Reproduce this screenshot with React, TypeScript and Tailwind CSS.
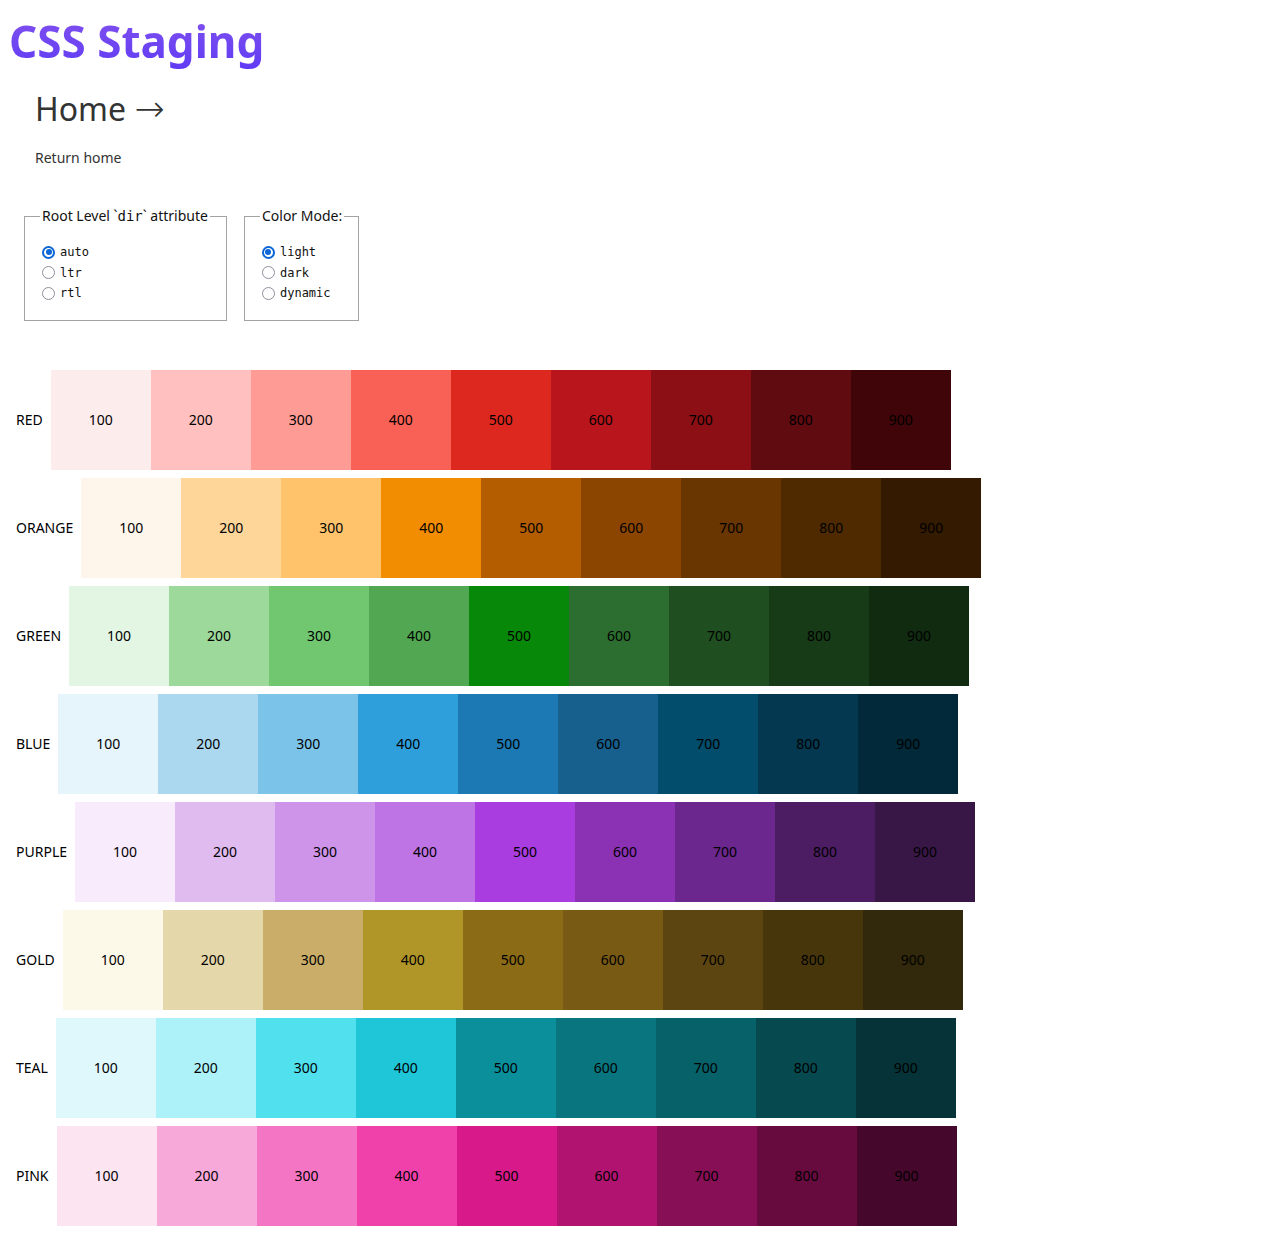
import React from "react"

type Scale = { name: string; colors: string[] }

const scales: Scale[] = [
  {
    name: "RED",
    colors: ["#fdecec", "#ffc0bf", "#ff9b95", "#f96156", "#dc281e", "#b8161c", "#8b0f14", "#5f0b10", "#3f0508"],
  },
  {
    name: "ORANGE",
    colors: ["#fff6eb", "#ffd699", "#ffc46b", "#f28c00", "#b35c00", "#8c4500", "#693500", "#4f2a00", "#331a00"],
  },
  {
    name: "GREEN",
    colors: ["#e3f5e3", "#9dd99b", "#70c770", "#52a852", "#088808", "#2b6e2f", "#1f4f20", "#173b17", "#112b11"],
  },
  {
    name: "BLUE",
    colors: ["#e6f4fb", "#acd8ef", "#7bc3e8", "#2f9fdc", "#1d79b3", "#175f8d", "#034d6c", "#033850", "#012939"],
  },
  {
    name: "PURPLE",
    colors: ["#f8ebfc", "#e0bbf0", "#cd94ea", "#be74e4", "#aa3de0", "#8a31b4", "#6b278e", "#4c1d62", "#381747"],
  },
  {
    name: "GOLD",
    colors: ["#fdf9e9", "#e4d7aa", "#c9ad68", "#b09529", "#8b6b15", "#795a14", "#5c4510", "#47360c", "#32280b"],
  },
  {
    name: "TEAL",
    colors: ["#dff8fb", "#acf2f8", "#50e0ee", "#1fc6d7", "#0b8f9b", "#09767f", "#076168", "#064a50", "#053338"],
  },
  {
    name: "PINK",
    colors: ["#fce4f1", "#f7a9d9", "#f375c3", "#ef41a9", "#d8198a", "#b11470", "#870f55", "#670b3f", "#45072b"],
  },
]

const steps = ["100", "200", "300", "400", "500", "600", "700", "800", "900"]

function Radio({ label, checked }: { label: string; checked?: boolean }) {
  return (
    <label className="flex items-center gap-[5px] h-[20.5px] ml-[2px]">
      {checked ? (
        <span className="w-[13px] h-[13px] rounded-full border-2 border-[#0b66d6] flex items-center justify-center">
          <span className="w-[6px] h-[6px] rounded-full bg-[#0b66d6]" />
        </span>
      ) : (
        <span className="w-[13px] h-[13px] rounded-full border border-[#8f8f9d]" />
      )}
      <span className="font-['DejaVu_Sans_Mono',monospace] text-[12px] text-[#111]">{label}</span>
    </label>
  )
}

export default function App() {
  return (
    <div className="min-h-[1242px] bg-white font-['Noto_Sans',sans-serif] text-[#111]">
      <h1 className="pt-[8px] pl-[9px] text-[44px] font-bold leading-normal">
        <span className="bg-gradient-to-b from-[#8451ee] to-[#5f3af4] bg-clip-text text-transparent">
          CSS Staging
        </span>
      </h1>

      <div className="pl-[35px] mt-[11px] text-[#333]">
        <h2 className="text-[32px] leading-normal">
          Home{" "}
          <span className="font-['DejaVu_Sans',sans-serif] font-extralight text-[36px] leading-none">→</span>
        </h2>
        <p className="mt-[15px] text-sm">Return home</p>
      </div>

      <div className="flex items-start gap-[17px] pl-[24px] mt-[41px]">
        <fieldset className="border border-[#a3a3a3] pl-[15px] pr-[16px] pb-[16px]">
          <legend className="px-[2px] text-sm leading-none">
            Root Level `<span className="font-['DejaVu_Sans_Mono',monospace] text-[14px]">dir</span>` attribute
          </legend>
          <div className="mt-[19px] flex flex-col">
            <Radio label="auto" checked />
            <Radio label="ltr" />
            <Radio label="rtl" />
          </div>
        </fieldset>
        <fieldset className="border border-[#a3a3a3] pl-[15px] pr-[14px] pb-[16px]">
          <legend className="px-[2px] text-sm leading-none">Color Mode:</legend>
          <div className="mt-[19px] flex flex-col">
            <Radio label="light" checked />
            <Radio label="dark" />
            <Radio label="dynamic" />
          </div>
        </fieldset>
      </div>

      <div className="mt-[49px] flex flex-col gap-2">
        {scales.map((s) => (
          <div key={s.name} className="flex items-center">
            <div className="pl-4 pr-2 text-sm text-black">{s.name}</div>
            {s.colors.map((c, i) => (
              <div
                key={steps[i]}
                className="w-[100px] h-[100px] flex items-center justify-center text-sm text-black"
                style={{ backgroundColor: c }}
              >
                {steps[i]}
              </div>
            ))}
          </div>
        ))}
      </div>
    </div>
  )
}
